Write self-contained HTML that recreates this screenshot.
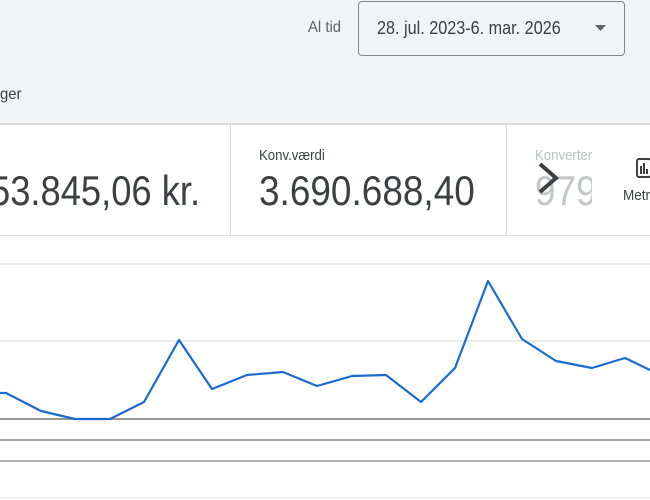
<!DOCTYPE html>
<html><head><meta charset="utf-8"><style>
body{margin:0;width:650px;height:500px;overflow:hidden;background:#fff;font-family:"Liberation Sans",sans-serif;position:relative}
.hdr{position:absolute;left:0;top:0;width:650px;height:123px;background:#f1f3f4;border-bottom:2px solid #dadce0}
.t{position:absolute;white-space:nowrap;transform-origin:0 0}
.box{position:absolute;left:358px;top:1px;width:267px;height:55px;border:1px solid #80868b;border-radius:4px;background:#f1f3f4;box-sizing:border-box}
.cards{position:absolute;left:0;top:125px;width:650px;height:110px;border-bottom:1px solid #e0e0e0}
.div{position:absolute;top:0;width:1px;height:110px;background:#dadce0}
</style></head><body>
<div class="hdr"></div>
<div class="t" style="left:308px;top:19px;font-size:16px;color:#5f6368;transform:scaleX(.93)">Al tid</div>
<div class="box"></div>
<div class="t" style="left:377px;top:18px;font-size:18px;color:#3c4043;transform:scaleX(.9)">28. jul. 2023-6. mar. 2026</div>
<svg style="position:absolute;left:594px;top:24px" width="14" height="8"><path d="M1 1h11l-5.5 6z" fill="#5f6368"/></svg>
<div class="t" style="left:0;top:86px;font-size:16px;color:#3c4043;transform:scaleX(.93)">ger</div>
<div class="cards">
<div class="div" style="left:230px"></div>
<div class="div" style="left:506px"></div>
</div>
<div class="t" style="left:-10px;top:167px;font-size:42px;color:#3c4043;transform:scaleX(.865)">53.845,06 kr.</div>
<div class="t" style="left:259px;top:147px;font-size:15px;color:#3c4043;transform:scaleX(.88)">Konv.værdi</div>
<div class="t" style="left:259px;top:167px;font-size:42px;color:#3c4043;transform:scaleX(.88)">3.690.688,40</div>
<div style="position:absolute;left:535px;top:140px;width:57px;height:80px;overflow:hidden">
<div class="t" style="left:0;top:7px;font-size:15px;color:#bdc1c6;transform:scaleX(.88)">Konvertering</div>
<div class="t" style="left:0;top:27px;font-size:42px;color:#c4c7ca;transform:scaleX(.88)">979</div>
</div>
<svg style="position:absolute;left:535px;top:158px" width="30" height="40"><path d="M5 6l16 14-16 14" fill="none" stroke="#3c4043" stroke-width="4"/></svg>
<svg style="position:absolute;left:634px;top:157px" width="16" height="22"><rect x="3" y="2" width="14" height="18" rx="2" fill="none" stroke="#3c4043" stroke-width="2"/><path d="M7 9v8M10 6v11M13 12v5" stroke="#3c4043" stroke-width="2"/></svg>
<div class="t" style="left:623px;top:187px;font-size:15px;color:#3c4043;transform:scaleX(.9)">Metrikker</div>
<svg style="position:absolute;left:0;top:0" width="650" height="500">
<g stroke-width="1.5">
<line x1="0" y1="264" x2="650" y2="264" stroke="#e3e3e3"/>
<line x1="0" y1="341" x2="650" y2="341" stroke="#e3e3e3"/>
<line x1="0" y1="419" x2="650" y2="419" stroke="#777"/>
<line x1="0" y1="440" x2="650" y2="440" stroke="#888"/>
<line x1="0" y1="461" x2="650" y2="461" stroke="#999"/>
<line x1="0" y1="498" x2="650" y2="498" stroke="#e8e8e8"/>
</g>
<polyline fill="none" stroke="#1a6bd0" stroke-width="2.2" stroke-linejoin="round" points="0,393 6,393 41,411 75,419 110,419 144,402 179,340 212,389 247,375 283,372 317,386 352,376 386,375 421,402 455,368 488,281 522,339 556,361 592,368 625,358 650,370"/>
</svg>
</body></html>
